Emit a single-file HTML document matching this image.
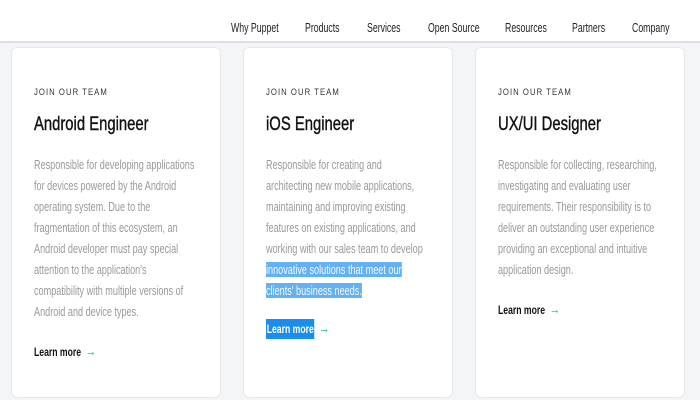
<!DOCTYPE html>
<html><head><style>
*{margin:0;padding:0;box-sizing:border-box}
body{width:700px;height:400px;overflow:hidden;background:#f4f5f7;font-family:"Liberation Sans",sans-serif;position:relative}
.hdr{position:absolute;left:0;top:0;width:700px;height:43px;background:#fff;border-bottom:2px solid #dde1e6}
.nav{position:absolute;top:21px;font-size:12.5px;color:#222;white-space:nowrap;transform:scaleX(0.7);transform-origin:left top}
.card{position:absolute;top:47px;width:210px;height:351px;background:#fff;border:1px solid #e6e8eb;border-radius:6px}
.card div{white-space:nowrap;transform-origin:left top}
.k{position:absolute;left:22px;top:39px;font-size:9.5px;letter-spacing:1.3px;color:#333;transform:scaleX(0.81)}
.t{position:absolute;left:22px;top:66px;font-size:19px;color:#111;transform:scaleX(0.78);-webkit-text-stroke:0.4px #111}
.b{position:absolute;left:22px;top:106px;font-size:13px;line-height:21px;color:#999;transform:scaleX(0.7)}
.l{position:absolute;left:22px;font-size:12px;font-weight:bold;color:#111;transform:scaleX(0.72)}
.a{color:#22c7a0;font-weight:bold;margin-left:6px;font-size:15px}
.hl{background:#63b1f5;color:#f4f8ff}
</style></head><body>
<div class="hdr">
<span class="nav" style="left:231px">Why Puppet</span>
<span class="nav" style="left:305px">Products</span>
<span class="nav" style="left:367px">Services</span>
<span class="nav" style="left:428px">Open Source</span>
<span class="nav" style="left:505px">Resources</span>
<span class="nav" style="left:572px">Partners</span>
<span class="nav" style="left:632px">Company</span>
</div>
<div class="card" style="left:11px">
<div class="k">JOIN OUR TEAM</div><div class="t">Android Engineer</div>
<div class="b">Responsible for developing applications<br>for devices powered by the Android<br>operating system. Due to the<br>fragmentation of this ecosystem, an<br>Android developer must pay special<br>attention to the application's<br>compatibility with multiple versions of<br>Android and device types.</div>
<div class="l" style="top:295px">Learn more<span class="a">→</span></div>
</div>
<div class="card" style="left:243px">
<div class="k">JOIN OUR TEAM</div><div class="t">iOS Engineer</div>
<div class="b">Responsible for creating and<br>architecting new mobile applications,<br>maintaining and improving existing<br>features on existing applications, and<br>working with our sales team to develop<br><span class="hl">innovative solutions that meet our</span><br><span class="hl">clients' business needs.</span></div>
<div class="l" style="top:271px"><span style="background:#1a8ef0;color:#fff;display:inline-block;padding:3px 1px;">Learn more</span><span class="a">→</span></div>
</div>
<div class="card" style="left:475px">
<div class="k">JOIN OUR TEAM</div><div class="t">UX/UI Designer</div>
<div class="b">Responsible for collecting, researching,<br>investigating and evaluating user<br>requirements. Their responsibility is to<br>deliver an outstanding user experience<br>providing an exceptional and intuitive<br>application design.</div>
<div class="l" style="top:253px">Learn more<span class="a">→</span></div>
</div>
</body></html>
